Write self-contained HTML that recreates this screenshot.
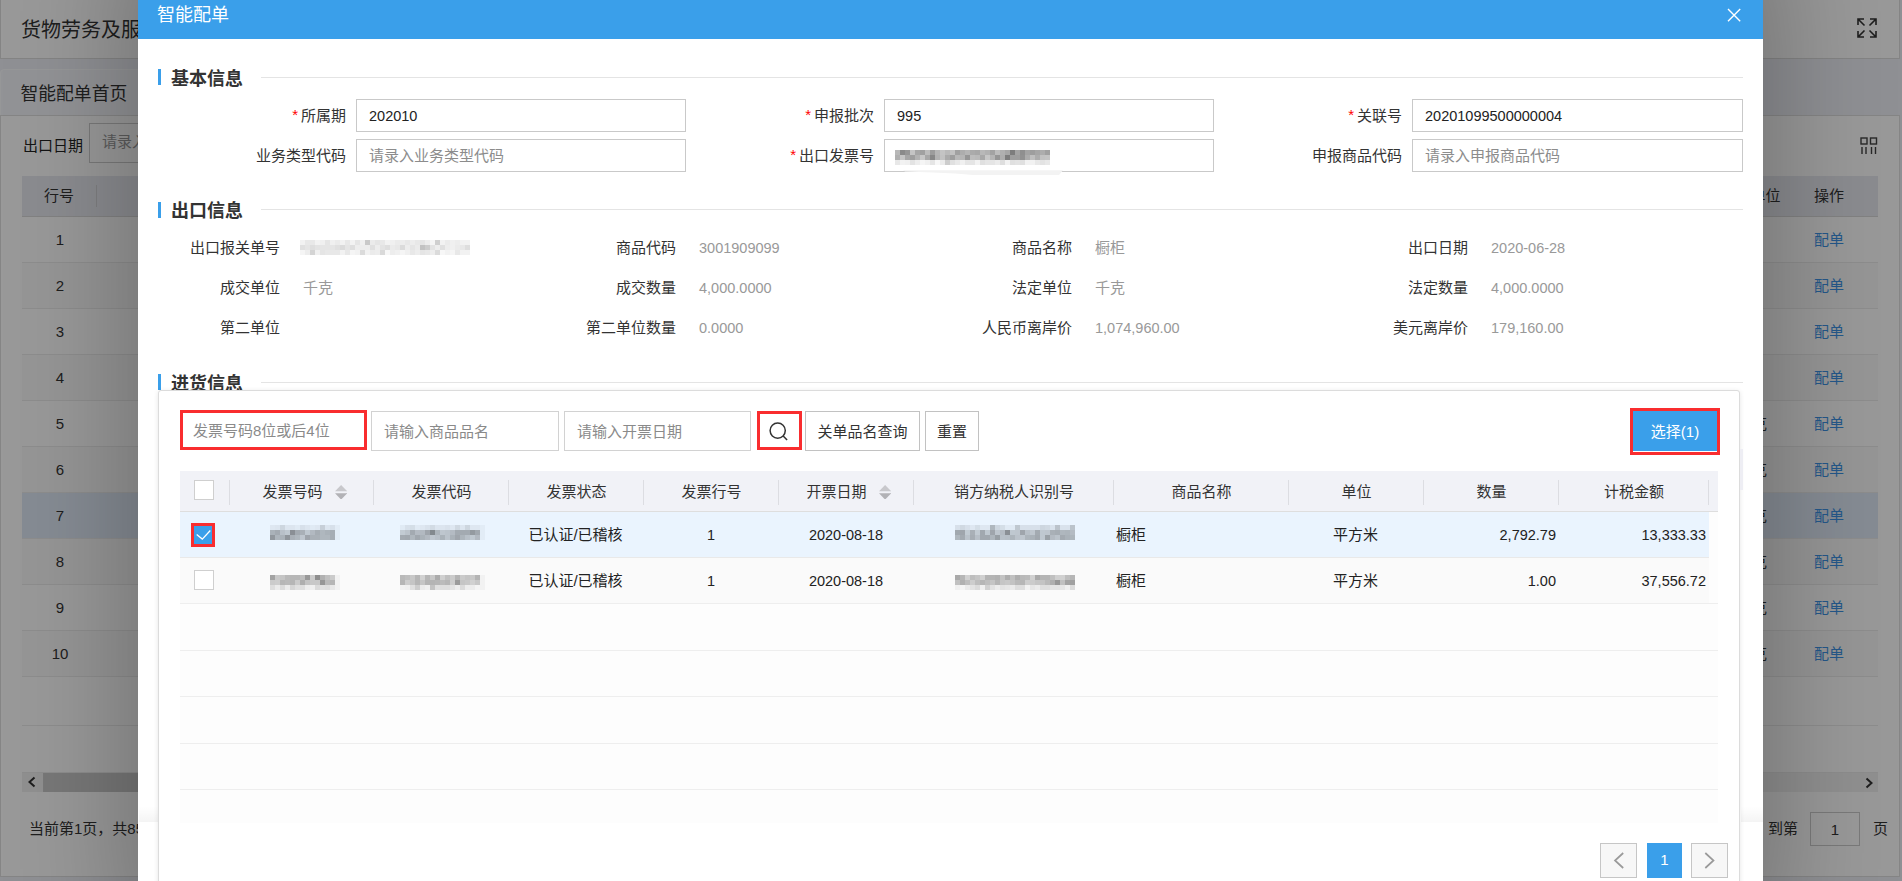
<!DOCTYPE html>
<html lang="zh-CN">
<head>
<meta charset="utf-8">
<title>智能配单</title>
<style>
*{box-sizing:border-box;margin:0;padding:0}
html,body{width:1902px;height:881px;overflow:hidden}
body{font-family:"Liberation Sans","Noto Sans CJK SC",sans-serif;color:#333;background:#eef0f5;position:relative;font-size:15px}
.abs{position:absolute}
/* ---------- underlying page ---------- */
#bgpage{position:absolute;left:0;top:0;width:1902px;height:881px;background:#eef0f7;overflow:hidden}
#topbar{position:absolute;left:0;top:0;width:1900px;height:59px;background:#fff;border:1px solid #dcdcdc;border-top:none}
#topbar .t{position:absolute;left:20px;top:16px;font-size:20px;line-height:28px;color:#333;white-space:nowrap}
#tabbar{position:absolute;left:0;top:69px;width:400px;height:47px;background:#f3f5fa;border:1px solid #fbfcfe;border-radius:4px 4px 0 0}
#tabbar .t{position:absolute;left:19.5px;top:9.5px;font-size:17.8px;line-height:28px;color:#333;white-space:nowrap}
#main{position:absolute;left:0;top:115px;width:1900px;height:762px;background:#fff;box-shadow:inset 0 0 0 1px #dedede}
#main .lbl{position:absolute;left:23px;top:20px;font-size:15px;line-height:22px;color:#222;white-space:nowrap}
#main .inp{position:absolute;left:89px;top:8px;width:200px;height:40px;border:1px solid #ccc;background:#fff;padding-left:12px;line-height:36px;font-size:15px;color:#999;white-space:nowrap}
#bgth{position:absolute;left:22px;top:61px;width:1856px;height:41px;background:#e8eaf1;border-bottom:1px solid #d9d9d9}
#bgth span{position:absolute;top:9px;font-size:15px;line-height:22px;color:#333;white-space:nowrap}
#bgth i{position:absolute;top:9px;width:1px;height:22px;background:#d4d4d8}
.bgrow{position:absolute;left:22px;width:1856px;height:46px;border-bottom:1px solid #ebebeb;background:#fff}
.bgrow.alt{background:#fafafa}
.bgrow.hl{background:#dfe9f7}
.bgrow .n{position:absolute;left:0;width:76px;text-align:center;top:12px;font-size:15px;line-height:22px;color:#333}
.bgrow .u{position:absolute;left:1730px;top:12px;font-size:15px;line-height:22px;color:#333}
.bgrow .a{position:absolute;left:1792px;top:12px;font-size:15px;line-height:22px;color:#3d93e6}
#hscroll{position:absolute;left:22px;top:658px;width:1856px;height:19px;background:#f0f0f0}
#hscroll .thumb{position:absolute;left:21px;top:0;width:1600px;height:19px;background:#c8c8c8}
#pgl{position:absolute;left:29px;top:703px;font-size:15px;line-height:22px;color:#333;white-space:nowrap}
#pgr{position:absolute;left:1768px;top:703px;font-size:15px;line-height:22px;color:#333;white-space:nowrap}
#pginp{position:absolute;left:1810px;top:697px;width:50px;height:34px;border:1px solid #ccc;background:#fff;text-align:center;line-height:33px;font-size:15px;color:#333}
#pgy{position:absolute;left:1873px;top:703px;font-size:15px;line-height:22px;color:#333}
#mask{position:absolute;left:0;top:0;width:1902px;height:881px;background:rgba(0,0,0,.4)}
#shadow{position:absolute;left:138px;top:-60px;width:1625px;height:1000px;box-shadow:0 0 110px 10px rgba(0,0,0,.28)}
/* ---------- modal ---------- */
#modal{position:absolute;left:138px;top:0;width:1625px;height:881px;background:#fff;overflow:hidden}
#mhead{position:absolute;left:0;top:0;width:1625px;height:39px;background:#3a9fea}
#mhead .t{position:absolute;left:19px;top:2px;font-size:18px;line-height:27px;color:#fff;white-space:nowrap}

/* modal body: coordinates relative to modal (x-138) */
.sec{position:absolute;left:20px;width:1585px;height:20px}
.sec .bar{position:absolute;left:0;top:2px;width:3px;height:16px;background:#3a9fea}
.sec .tt{position:absolute;left:13px;top:-2.5px;font-size:18px;line-height:28px;font-weight:bold;color:#333;white-space:nowrap}
.sec .ln{position:absolute;left:103px;right:0;top:10px;height:1px;background:#e4e4e4}
.fl{position:absolute;width:188px;text-align:right;font-size:15px;line-height:34px;color:#333;white-space:nowrap}
.fl b{color:#f00;font-weight:normal;font-family:"Liberation Sans",sans-serif;margin-right:3px;position:relative;top:-1.2px}
.fi{position:absolute;width:330px;height:33px;border:1px solid #c9c9c9;background:#fff;padding-left:12px;font-size:14.5px;line-height:32px;color:#222;white-space:nowrap}
.fi.ph{color:#8c8c8c;font-size:15px}
.el{position:absolute;width:122px;text-align:right;font-size:15px;line-height:24px;margin-top:-0.5px;color:#333;white-space:nowrap}
.ev{position:absolute;font-size:14.5px;line-height:24px;margin:-0.5px 0 0 1px;color:#999;white-space:nowrap}
#panel{position:absolute;left:20px;top:390px;width:1582px;height:520px;border:1px solid #dcdcdc;border-radius:3px;background:#fff;box-shadow:0 1px 5px rgba(0,0,0,.10)}
.si{position:absolute;top:411px;height:40px;width:187px;border:1px solid #d2d2d2;background:#fff;padding-left:12px;font-size:15px;line-height:40px;color:#8a8a8a;white-space:nowrap}
.sb{position:absolute;top:411px;height:40px;border:1px solid #c2c2c2;background:#fff;font-size:15px;line-height:40px;color:#333;text-align:center;white-space:nowrap}
.red{border:2px solid #ee2a33 !important}
#selbtn{position:absolute;left:1492px;top:408px;width:90px;height:47px;border:3px solid #f92d2f;background:#fff linear-gradient(#3a9fea,#3a9fea) no-repeat;background-size:100% 40px;color:#fff;font-size:15px;line-height:41px;text-align:center;white-space:nowrap}
#tbl{position:absolute;left:42px;top:471px;width:1538px;height:352px;background:#fdfdfd}
#thead{position:absolute;left:0;top:0;width:1538px;height:41px;background:#f1f2f7;border-bottom:1px solid #dedede}
#thead span{position:absolute;top:9.7px;margin-left:1px;font-size:15px;line-height:22px;color:#333;white-space:nowrap;text-align:center}
#thead i{position:absolute;top:9px;width:1px;height:25px;background:#dcdde2}
.tr{position:absolute;left:0;width:1529px;height:46px}
.tr span{position:absolute;top:12px;font-size:15px;line-height:22px;color:#222;white-space:nowrap}
.tr span.num{font-size:14.5px;padding-right:2px !important}
.tl{position:absolute;left:0;width:1538px;height:1px;background:#eeeeee}
.cb{position:absolute;width:20px;height:20px;border:1px solid #cfcfcf;background:#fff}
.pg{position:absolute;top:843px;height:35px;border:1px solid #c6c6c6;background:#f7f7f7}
</style>
</head>
<body>
<div id="bgpage">
  <div id="topbar"><div class="t">货物劳务及服</div>
    <svg class="abs" style="left:1855px;top:17px" width="22" height="22" viewBox="0 0 22 22" fill="none" stroke="#333" stroke-width="1.6"><path d="M2 8V2h6M2 2l6.5 6.5M14 2h6v6M20 2l-6.5 6.5M2 14v6h6M2 20l6.5-6.5M20 14v6h-6M20 20l-6.5-6.5"/></svg>
  </div>
  <div id="tabbar"><div class="t">智能配单首页</div></div>
  <div id="main">
    <div class="lbl">出口日期</div>
    <div class="inp">请录入</div>
    <svg class="abs" style="left:1860px;top:22px" width="18" height="18" viewBox="0 0 18 18" fill="none" stroke="#444" stroke-width="1.4"><rect x="1" y="1" width="6" height="6"/><rect x="10.5" y="1" width="6" height="6"/><path d="M2 10v7M6 10v7M11.5 10v7M15.5 10v7"/></svg>
    <div id="bgth"><span style="left:22px">行号</span><i style="left:74px"></i><span style="left:1728.5px">单位</span><span style="left:1792px">操作</span></div>
    <div class="bgrow" style="top:102px"><span class="n">1</span><span class="a">配单</span></div>
    <div class="bgrow alt" style="top:148px"><span class="n">2</span><span class="a">配单</span></div>
    <div class="bgrow" style="top:194px"><span class="n">3</span><span class="a">配单</span></div>
    <div class="bgrow alt" style="top:240px"><span class="n">4</span><span class="a">配单</span></div>
    <div class="bgrow" style="top:286px"><span class="n">5</span><span class="u">克</span><span class="a">配单</span></div>
    <div class="bgrow alt" style="top:332px"><span class="n">6</span><span class="u">克</span><span class="a">配单</span></div>
    <div class="bgrow hl" style="top:378px"><span class="n">7</span><span class="u">克</span><span class="a">配单</span></div>
    <div class="bgrow alt" style="top:424px"><span class="n">8</span><span class="u">克</span><span class="a">配单</span></div>
    <div class="bgrow" style="top:470px"><span class="n">9</span><span class="u">克</span><span class="a">配单</span></div>
    <div class="bgrow alt" style="top:516px"><span class="n">10</span><span class="u">克</span><span class="a">配单</span></div>
    <div class="bgrow" style="top:562px;height:49px"></div>
    <div class="bgrow" style="top:611px;height:47px"></div>
    <div id="hscroll"><div class="thumb"></div>
      <svg class="abs" style="left:4px;top:3px" width="12" height="12" viewBox="0 0 12 12" fill="none" stroke="#333" stroke-width="2"><path d="M8.5 1.5L3.5 6l5 4.5"/></svg>
      <svg class="abs" style="left:1841px;top:4px" width="12" height="12" viewBox="0 0 12 12" fill="none" stroke="#333" stroke-width="2"><path d="M3.5 1.5L8.5 6l-5 4.5"/></svg>
    </div>
    <div id="pgl">当前第1页，共85</div>
    <div id="pgr">到第</div><div id="pginp">1</div><div id="pgy">页</div>
  </div>
  <div id="mask"></div>
  <div id="shadow"></div>
</div>
<div id="modal">
  <div id="mhead"><div class="t">智能配单</div>
    <svg class="abs" style="left:1588.5px;top:8.2px" width="14" height="14" viewBox="0 0 14 14" fill="none" stroke="#fff" stroke-width="1.4"><path d="M1 1l12.2 12.2M13.2 1L1 13.2"/></svg>
  </div>
  <div class="sec" style="top:67px"><div class="bar"></div><div class="tt">基本信息</div><div class="ln"></div></div>
  <div class="fl" style="left:20px;top:99px"><b>*</b>所属期</div>
  <div class="fi" style="left:218px;top:99px">202010</div>
  <div class="fl" style="left:548px;top:99px"><b>*</b>申报批次</div>
  <div class="fi" style="left:746px;top:99px">995</div>
  <div class="fl" style="left:1076px;top:99px"><b>*</b>关联号</div>
  <div class="fi" style="left:1274px;top:99px;width:331px">20201099500000004</div>
  <div class="fl" style="left:20px;top:139px">业务类型代码</div>
  <div class="fi ph" style="left:218px;top:139px">请录入业务类型代码</div>
  <div class="fl" style="left:548px;top:139px"><b>*</b>出口发票号</div>
  <div class="fi" style="left:746px;top:139px"></div>
  <div class="fl" style="left:1076px;top:139px">申报商品代码</div>
  <div class="fi ph" style="left:1274px;top:139px;width:331px">请录入申报商品代码</div>
  <div class="sec" style="top:199px"><div class="bar" style="top:3px"></div><div class="tt">出口信息</div><div class="ln"></div></div>
  <div class="el" style="left:20px;top:236px">出口报关单号</div>
  <div class="el" style="left:416px;top:236px">商品代码</div>
  <div class="ev" style="left:560px;top:236px">3001909099</div>
  <div class="el" style="left:812px;top:236px">商品名称</div>
  <div class="ev" style="left:956px;top:236px;font-size:15px">橱柜</div>
  <div class="el" style="left:1208px;top:236px">出口日期</div>
  <div class="ev" style="left:1352px;top:236px">2020-06-28</div>
  <div class="el" style="left:20px;top:276px">成交单位</div>
  <div class="ev" style="left:164px;top:276px;font-size:15px">千克</div>
  <div class="el" style="left:416px;top:276px">成交数量</div>
  <div class="ev" style="left:560px;top:276px">4,000.0000</div>
  <div class="el" style="left:812px;top:276px">法定单位</div>
  <div class="ev" style="left:956px;top:276px;font-size:15px">千克</div>
  <div class="el" style="left:1208px;top:276px">法定数量</div>
  <div class="ev" style="left:1352px;top:276px">4,000.0000</div>
  <div class="el" style="left:20px;top:316px">第二单位</div>
  <div class="el" style="left:416px;top:316px">第二单位数量</div>
  <div class="ev" style="left:560px;top:316px">0.0000</div>
  <div class="el" style="left:812px;top:316px">人民币离岸价</div>
  <div class="ev" style="left:956px;top:316px">1,074,960.00</div>
  <div class="el" style="left:1208px;top:316px">美元离岸价</div>
  <div class="ev" style="left:1352px;top:316px">179,160.00</div>
  <div class="sec" style="top:372px"><div class="bar"></div><div class="tt">进货信息</div><div class="ln"></div></div>
  <div class="abs" style="left:1px;top:806px;width:19px;height:16px;background:linear-gradient(rgba(0,0,0,0),rgba(0,0,0,.045))"></div><div class="abs" style="left:1603px;top:806px;width:22px;height:16px;background:linear-gradient(rgba(0,0,0,0),rgba(0,0,0,.045))"></div>
  <div id="panel"></div>
  <div class="si" style="left:42px;top:410px;width:187px;height:40px;border:3px solid #f92d2f;padding-left:10px;line-height:36px">发票号码8位或后4位</div>
  <div class="si" style="left:233px;width:188px">请输入商品品名</div>
  <div class="si" style="left:426px;width:187px">请输入开票日期</div>
  <div class="sb" style="left:619px;top:411px;width:45px;height:39px;border:3px solid #f92d2f"><svg class="abs" style="left:5px;top:4px" width="30" height="30" viewBox="0 0 30 30" fill="none" stroke="#333" stroke-width="1.5"><circle cx="12.7" cy="12.6" r="7.6"/><path d="M18.2 18l3.9 4"/></svg></div>
  <div class="sb" style="left:667px;width:115px">关单品名查询</div>
  <div class="sb" style="left:787px;width:54px">重置</div>
  <div class="abs" style="left:1602px;top:449px;width:3px;height:41px;background:#eeeef4"></div>
  <div id="selbtn">选择(1)</div>
  <div id="tbl">
  <div id="thead">
  <div class="cb" style="left:14px;top:9px"></div>
  <span style="left:81.5px;width:auto">发票号码</span>
  <svg class="abs" style="left:154.9px;top:13.5px" width="12.2" height="14.6" viewBox="0 0 12.2 14.6"><path d="M6.1 0l6.1 6.3H0z" fill="#c8c8cc"/><path d="M6.1 14.6l6.1-6.3H0z" fill="#b2b2b6"/></svg>
  <span style="left:193px;width:135px">发票代码</span>
  <span style="left:328px;width:135px">发票状态</span>
  <span style="left:463px;width:135px">发票行号</span>
  <span style="left:625.5px;width:auto">开票日期</span>
  <svg class="abs" style="left:699px;top:13.5px" width="12.2" height="14.6" viewBox="0 0 12.2 14.6"><path d="M6.1 0l6.1 6.3H0z" fill="#c8c8cc"/><path d="M6.1 14.6l6.1-6.3H0z" fill="#b2b2b6"/></svg>
  <span style="left:733px;width:200px">销方纳税人识别号</span>
  <span style="left:933px;width:175px">商品名称</span>
  <span style="left:1108px;width:135px">单位</span>
  <span style="left:1243px;width:135px">数量</span>
  <span style="left:1378px;width:150px">计税金额</span>
  <i style="left:49px"></i>
  <i style="left:193px"></i>
  <i style="left:328px"></i>
  <i style="left:463px"></i>
  <i style="left:598px"></i>
  <i style="left:733px"></i>
  <i style="left:933px"></i>
  <i style="left:1108px"></i>
  <i style="left:1243px"></i>
  <i style="left:1378px"></i>
  <i style="left:1528px"></i>
  </div>
  <div class="tr" style="top:41px;background:#eaf4fe;border-bottom:1px solid #e9e9e9">
  <div class="cb" style="left:14px;top:13px;background:#3a9fea;border-color:#3a9fea"><svg class="abs" style="left:-1px;top:-1px" width="20" height="20" viewBox="0 0 20 20" fill="none" stroke="#fff" stroke-width="1.3"><path d="M2.7 9.5l5.6 4.6 8-8.6"/></svg></div><div class="abs" style="left:11px;top:11px;width:24px;height:24px;border:3px solid #f92d2f"></div>
  <span class="" style="left:328px;width:135px;text-align:center;padding:0 3px;">已认证/已稽核</span>
  <span class="num" style="left:463px;width:135px;text-align:center;padding:0 3px;">1</span>
  <span class="num" style="left:598px;width:135px;text-align:center;padding:0 3px;">2020-08-18</span>
  <span class="" style="left:933px;width:175px;text-align:left;padding:0 3px;">橱柜</span>
  <span class="" style="left:1108px;width:135px;text-align:center;padding:0 3px;">平方米</span>
  <span class="num" style="left:1243px;width:135px;text-align:right;padding:0 3px;">2,792.79</span>
  <span class="num" style="left:1378px;width:150px;text-align:right;padding:0 3px;">13,333.33</span>
  </div>
  <div class="tr" style="top:87px;background:#fafafa;border-bottom:1px solid #e9e9e9">
  <div class="cb" style="left:14px;top:12px"></div>
  <span class="" style="left:328px;width:135px;text-align:center;padding:0 3px;">已认证/已稽核</span>
  <span class="num" style="left:463px;width:135px;text-align:center;padding:0 3px;">1</span>
  <span class="num" style="left:598px;width:135px;text-align:center;padding:0 3px;">2020-08-18</span>
  <span class="" style="left:933px;width:175px;text-align:left;padding:0 3px;">橱柜</span>
  <span class="" style="left:1108px;width:135px;text-align:center;padding:0 3px;">平方米</span>
  <span class="num" style="left:1243px;width:135px;text-align:right;padding:0 3px;">1.00</span>
  <span class="num" style="left:1378px;width:150px;text-align:right;padding:0 3px;">37,556.72</span>
  </div>
  <div class="tl" style="top:132px"></div>
  <div class="tl" style="top:178.7px"></div>
  <div class="tl" style="top:225.4px"></div>
  <div class="tl" style="top:272.2px"></div>
  <div class="tl" style="top:317.5px"></div>
  </div>
  <div class="pg" style="left:1462px;width:37px"><svg class="abs" style="left:11px;top:8.4px" width="14" height="17" viewBox="0 0 14 17" fill="none" stroke="#9a9a9a" stroke-width="1.7"><path d="M11.2 1L3 8.5l8.2 7.5"/></svg></div>
  <div class="pg" style="left:1509px;width:35px;background:#3a9fea;border-color:#3a9fea;color:#fff;text-align:center;font-size:15px;line-height:31px">1</div>
  <div class="pg" style="left:1553px;width:37px"><svg class="abs" style="left:10px;top:8.4px" width="14" height="17" viewBox="0 0 14 17" fill="none" stroke="#9a9a9a" stroke-width="1.7"><path d="M3.3 1l8.2 7.5L3.3 16"/></svg></div>
  <svg class="abs" style="left:757px;top:150px" width="160" height="15" viewBox="0 0 160 15" shape-rendering="crispEdges"><g fill="#000"><rect x="0" y="0" width="5" height="5" fill-opacity=".28"/><rect x="5" y="0" width="5" height="5" fill-opacity=".46"/><rect x="10" y="0" width="5" height="5" fill-opacity=".41"/><rect x="15" y="0" width="5" height="5" fill-opacity=".23"/><rect x="20" y="0" width="5" height="5" fill-opacity=".35"/><rect x="25" y="0" width="5" height="5" fill-opacity=".37"/><rect x="30" y="0" width="5" height="5" fill-opacity=".26"/><rect x="35" y="0" width="5" height="5" fill-opacity=".39"/><rect x="40" y="0" width="5" height="5" fill-opacity=".29"/><rect x="45" y="0" width="5" height="5" fill-opacity=".23"/><rect x="50" y="0" width="5" height="5" fill-opacity=".27"/><rect x="55" y="0" width="5" height="5" fill-opacity=".24"/><rect x="60" y="0" width="5" height="5" fill-opacity=".37"/><rect x="65" y="0" width="5" height="5" fill-opacity=".32"/><rect x="70" y="0" width="5" height="5" fill-opacity=".29"/><rect x="75" y="0" width="5" height="5" fill-opacity=".33"/><rect x="80" y="0" width="5" height="5" fill-opacity=".34"/><rect x="85" y="0" width="5" height="5" fill-opacity=".28"/><rect x="90" y="0" width="5" height="5" fill-opacity=".30"/><rect x="95" y="0" width="5" height="5" fill-opacity=".36"/><rect x="100" y="0" width="5" height="5" fill-opacity=".26"/><rect x="105" y="0" width="5" height="5" fill-opacity=".31"/><rect x="110" y="0" width="5" height="5" fill-opacity=".35"/><rect x="115" y="0" width="5" height="5" fill-opacity=".51"/><rect x="120" y="0" width="5" height="5" fill-opacity=".36"/><rect x="125" y="0" width="5" height="5" fill-opacity=".44"/><rect x="130" y="0" width="5" height="5" fill-opacity=".36"/><rect x="135" y="0" width="5" height="5" fill-opacity=".38"/><rect x="140" y="0" width="5" height="5" fill-opacity=".35"/><rect x="145" y="0" width="5" height="5" fill-opacity=".32"/><rect x="150" y="0" width="5" height="5" fill-opacity=".37"/><rect x="0" y="5" width="5" height="5" fill-opacity=".31"/><rect x="5" y="5" width="5" height="5" fill-opacity=".23"/><rect x="10" y="5" width="5" height="5" fill-opacity=".35"/><rect x="15" y="5" width="5" height="5" fill-opacity=".38"/><rect x="20" y="5" width="5" height="5" fill-opacity=".30"/><rect x="25" y="5" width="5" height="5" fill-opacity=".22"/><rect x="30" y="5" width="5" height="5" fill-opacity=".34"/><rect x="35" y="5" width="5" height="5" fill-opacity=".47"/><rect x="40" y="5" width="5" height="5" fill-opacity=".30"/><rect x="45" y="5" width="5" height="5" fill-opacity=".24"/><rect x="50" y="5" width="5" height="5" fill-opacity=".33"/><rect x="55" y="5" width="5" height="5" fill-opacity=".38"/><rect x="60" y="5" width="5" height="5" fill-opacity=".28"/><rect x="65" y="5" width="5" height="5" fill-opacity=".29"/><rect x="70" y="5" width="5" height="5" fill-opacity=".41"/><rect x="75" y="5" width="5" height="5" fill-opacity=".26"/><rect x="80" y="5" width="5" height="5" fill-opacity=".27"/><rect x="85" y="5" width="5" height="5" fill-opacity=".34"/><rect x="90" y="5" width="5" height="5" fill-opacity=".22"/><rect x="95" y="5" width="5" height="5" fill-opacity=".29"/><rect x="100" y="5" width="5" height="5" fill-opacity=".41"/><rect x="105" y="5" width="5" height="5" fill-opacity=".32"/><rect x="110" y="5" width="5" height="5" fill-opacity=".51"/><rect x="115" y="5" width="5" height="5" fill-opacity=".38"/><rect x="120" y="5" width="5" height="5" fill-opacity=".38"/><rect x="125" y="5" width="5" height="5" fill-opacity=".43"/><rect x="130" y="5" width="5" height="5" fill-opacity=".33"/><rect x="135" y="5" width="5" height="5" fill-opacity=".25"/><rect x="140" y="5" width="5" height="5" fill-opacity=".32"/><rect x="145" y="5" width="5" height="5" fill-opacity=".24"/><rect x="150" y="5" width="5" height="5" fill-opacity=".23"/><rect x="0" y="10" width="5" height="5" fill-opacity=".09"/><rect x="5" y="10" width="5" height="5" fill-opacity=".05"/><rect x="10" y="10" width="5" height="5" fill-opacity=".06"/><rect x="15" y="10" width="5" height="5" fill-opacity=".11"/><rect x="20" y="10" width="5" height="5" fill-opacity=".07"/><rect x="25" y="10" width="5" height="5" fill-opacity=".04"/><rect x="30" y="10" width="5" height="5" fill-opacity=".06"/><rect x="35" y="10" width="5" height="5" fill-opacity=".10"/><rect x="40" y="10" width="5" height="5" fill-opacity=".03"/><rect x="45" y="10" width="5" height="5" fill-opacity=".08"/><rect x="50" y="10" width="5" height="5" fill-opacity=".20"/><rect x="55" y="10" width="5" height="5" fill-opacity=".12"/><rect x="60" y="10" width="5" height="5" fill-opacity=".09"/><rect x="65" y="10" width="5" height="5" fill-opacity=".06"/><rect x="70" y="10" width="5" height="5" fill-opacity=".10"/><rect x="75" y="10" width="5" height="5" fill-opacity=".10"/><rect x="80" y="10" width="5" height="5" fill-opacity=".05"/><rect x="85" y="10" width="5" height="5" fill-opacity=".12"/><rect x="90" y="10" width="5" height="5" fill-opacity=".10"/><rect x="95" y="10" width="5" height="5" fill-opacity=".10"/><rect x="100" y="10" width="5" height="5" fill-opacity=".08"/><rect x="105" y="10" width="5" height="5" fill-opacity=".13"/><rect x="110" y="10" width="5" height="5" fill-opacity=".05"/><rect x="115" y="10" width="5" height="5" fill-opacity=".12"/><rect x="120" y="10" width="5" height="5" fill-opacity=".11"/><rect x="125" y="10" width="5" height="5" fill-opacity=".12"/><rect x="130" y="10" width="5" height="5" fill-opacity=".05"/><rect x="135" y="10" width="5" height="5" fill-opacity=".05"/><rect x="140" y="10" width="5" height="5" fill-opacity=".09"/><rect x="145" y="10" width="5" height="5" fill-opacity=".11"/><rect x="150" y="10" width="5" height="5" fill-opacity=".09"/></g></svg>
  <svg class="abs" style="left:765px;top:169px" width="162" height="8" viewBox="0 0 162 8"><path d="M0 1.2L160 1.2 156 6 70 6 52 4.6 30 3.4 2 2.4z" fill="#f3f3f3"/></svg>
  <svg class="abs" style="left:162px;top:240px" width="175" height="15" viewBox="0 0 175 15" shape-rendering="crispEdges"><g fill="#000"><rect x="0" y="0" width="5" height="5" fill-opacity=".05"/><rect x="5" y="0" width="5" height="5" fill-opacity=".09"/><rect x="10" y="0" width="5" height="5" fill-opacity=".09"/><rect x="15" y="0" width="5" height="5" fill-opacity=".05"/><rect x="20" y="0" width="5" height="5" fill-opacity=".06"/><rect x="25" y="0" width="5" height="5" fill-opacity=".10"/><rect x="30" y="0" width="5" height="5" fill-opacity=".06"/><rect x="35" y="0" width="5" height="5" fill-opacity=".08"/><rect x="40" y="0" width="5" height="5" fill-opacity=".05"/><rect x="45" y="0" width="5" height="5" fill-opacity=".09"/><rect x="50" y="0" width="5" height="5" fill-opacity=".05"/><rect x="55" y="0" width="5" height="5" fill-opacity=".10"/><rect x="60" y="0" width="5" height="5" fill-opacity=".06"/><rect x="65" y="0" width="5" height="5" fill-opacity=".21"/><rect x="70" y="0" width="5" height="5" fill-opacity=".08"/><rect x="75" y="0" width="5" height="5" fill-opacity=".10"/><rect x="80" y="0" width="5" height="5" fill-opacity=".09"/><rect x="85" y="0" width="5" height="5" fill-opacity=".05"/><rect x="90" y="0" width="5" height="5" fill-opacity=".06"/><rect x="95" y="0" width="5" height="5" fill-opacity=".08"/><rect x="100" y="0" width="5" height="5" fill-opacity=".07"/><rect x="105" y="0" width="5" height="5" fill-opacity=".09"/><rect x="110" y="0" width="5" height="5" fill-opacity=".07"/><rect x="115" y="0" width="5" height="5" fill-opacity=".09"/><rect x="120" y="0" width="5" height="5" fill-opacity=".10"/><rect x="125" y="0" width="5" height="5" fill-opacity=".07"/><rect x="130" y="0" width="5" height="5" fill-opacity=".04"/><rect x="135" y="0" width="5" height="5" fill-opacity=".19"/><rect x="140" y="0" width="5" height="5" fill-opacity=".05"/><rect x="145" y="0" width="5" height="5" fill-opacity=".08"/><rect x="150" y="0" width="5" height="5" fill-opacity=".06"/><rect x="155" y="0" width="5" height="5" fill-opacity=".07"/><rect x="160" y="0" width="5" height="5" fill-opacity=".05"/><rect x="165" y="0" width="5" height="5" fill-opacity=".05"/><rect x="0" y="5" width="5" height="5" fill-opacity=".12"/><rect x="5" y="5" width="5" height="5" fill-opacity=".10"/><rect x="10" y="5" width="5" height="5" fill-opacity=".13"/><rect x="15" y="5" width="5" height="5" fill-opacity=".11"/><rect x="20" y="5" width="5" height="5" fill-opacity=".10"/><rect x="25" y="5" width="5" height="5" fill-opacity=".10"/><rect x="30" y="5" width="5" height="5" fill-opacity=".10"/><rect x="35" y="5" width="5" height="5" fill-opacity=".12"/><rect x="40" y="5" width="5" height="5" fill-opacity=".14"/><rect x="45" y="5" width="5" height="5" fill-opacity=".10"/><rect x="50" y="5" width="5" height="5" fill-opacity=".13"/><rect x="55" y="5" width="5" height="5" fill-opacity=".07"/><rect x="60" y="5" width="5" height="5" fill-opacity=".07"/><rect x="65" y="5" width="5" height="5" fill-opacity=".07"/><rect x="70" y="5" width="5" height="5" fill-opacity=".12"/><rect x="75" y="5" width="5" height="5" fill-opacity=".07"/><rect x="80" y="5" width="5" height="5" fill-opacity=".11"/><rect x="85" y="5" width="5" height="5" fill-opacity=".13"/><rect x="90" y="5" width="5" height="5" fill-opacity=".08"/><rect x="95" y="5" width="5" height="5" fill-opacity=".09"/><rect x="100" y="5" width="5" height="5" fill-opacity=".14"/><rect x="105" y="5" width="5" height="5" fill-opacity=".07"/><rect x="110" y="5" width="5" height="5" fill-opacity=".10"/><rect x="115" y="5" width="5" height="5" fill-opacity=".08"/><rect x="120" y="5" width="5" height="5" fill-opacity=".24"/><rect x="125" y="5" width="5" height="5" fill-opacity=".20"/><rect x="130" y="5" width="5" height="5" fill-opacity=".11"/><rect x="135" y="5" width="5" height="5" fill-opacity=".07"/><rect x="140" y="5" width="5" height="5" fill-opacity=".12"/><rect x="145" y="5" width="5" height="5" fill-opacity=".07"/><rect x="150" y="5" width="5" height="5" fill-opacity=".06"/><rect x="155" y="5" width="5" height="5" fill-opacity=".08"/><rect x="160" y="5" width="5" height="5" fill-opacity=".09"/><rect x="165" y="5" width="5" height="5" fill-opacity=".13"/><rect x="0" y="10" width="5" height="5" fill-opacity=".04"/><rect x="5" y="10" width="5" height="5" fill-opacity=".07"/><rect x="10" y="10" width="5" height="5" fill-opacity=".17"/><rect x="15" y="10" width="5" height="5" fill-opacity=".06"/><rect x="20" y="10" width="5" height="5" fill-opacity=".10"/><rect x="25" y="10" width="5" height="5" fill-opacity=".09"/><rect x="30" y="10" width="5" height="5" fill-opacity=".09"/><rect x="35" y="10" width="5" height="5" fill-opacity=".09"/><rect x="40" y="10" width="5" height="5" fill-opacity=".05"/><rect x="45" y="10" width="5" height="5" fill-opacity=".09"/><rect x="50" y="10" width="5" height="5" fill-opacity=".04"/><rect x="55" y="10" width="5" height="5" fill-opacity=".05"/><rect x="60" y="10" width="5" height="5" fill-opacity=".14"/><rect x="65" y="10" width="5" height="5" fill-opacity=".05"/><rect x="70" y="10" width="5" height="5" fill-opacity=".08"/><rect x="75" y="10" width="5" height="5" fill-opacity=".07"/><rect x="80" y="10" width="5" height="5" fill-opacity=".15"/><rect x="85" y="10" width="5" height="5" fill-opacity=".03"/><rect x="90" y="10" width="5" height="5" fill-opacity=".07"/><rect x="95" y="10" width="5" height="5" fill-opacity=".06"/><rect x="100" y="10" width="5" height="5" fill-opacity=".04"/><rect x="105" y="10" width="5" height="5" fill-opacity=".06"/><rect x="110" y="10" width="5" height="5" fill-opacity=".09"/><rect x="115" y="10" width="5" height="5" fill-opacity=".07"/><rect x="120" y="10" width="5" height="5" fill-opacity=".10"/><rect x="125" y="10" width="5" height="5" fill-opacity=".09"/><rect x="130" y="10" width="5" height="5" fill-opacity=".07"/><rect x="135" y="10" width="5" height="5" fill-opacity=".14"/><rect x="140" y="10" width="5" height="5" fill-opacity=".03"/><rect x="145" y="10" width="5" height="5" fill-opacity=".05"/><rect x="150" y="10" width="5" height="5" fill-opacity=".04"/><rect x="155" y="10" width="5" height="5" fill-opacity=".09"/><rect x="160" y="10" width="5" height="5" fill-opacity=".05"/><rect x="165" y="10" width="5" height="5" fill-opacity=".05"/></g></svg>
  <svg class="abs" style="left:132px;top:525px" width="70" height="15" viewBox="0 0 70 15" shape-rendering="crispEdges"><g fill="#000"><rect x="0" y="0" width="5" height="5" fill-opacity=".05"/><rect x="5" y="0" width="5" height="5" fill-opacity=".06"/><rect x="10" y="0" width="5" height="5" fill-opacity=".12"/><rect x="15" y="0" width="5" height="5" fill-opacity=".06"/><rect x="20" y="0" width="5" height="5" fill-opacity=".06"/><rect x="25" y="0" width="5" height="5" fill-opacity=".04"/><rect x="30" y="0" width="5" height="5" fill-opacity=".08"/><rect x="35" y="0" width="5" height="5" fill-opacity=".06"/><rect x="40" y="0" width="5" height="5" fill-opacity=".04"/><rect x="45" y="0" width="5" height="5" fill-opacity=".05"/><rect x="50" y="0" width="5" height="5" fill-opacity=".15"/><rect x="55" y="0" width="5" height="5" fill-opacity=".06"/><rect x="60" y="0" width="5" height="5" fill-opacity=".08"/><rect x="0" y="5" width="5" height="5" fill-opacity=".27"/><rect x="5" y="5" width="5" height="5" fill-opacity=".30"/><rect x="10" y="5" width="5" height="5" fill-opacity=".21"/><rect x="15" y="5" width="5" height="5" fill-opacity=".18"/><rect x="20" y="5" width="5" height="5" fill-opacity=".41"/><rect x="25" y="5" width="5" height="5" fill-opacity=".30"/><rect x="30" y="5" width="5" height="5" fill-opacity=".28"/><rect x="35" y="5" width="5" height="5" fill-opacity=".18"/><rect x="40" y="5" width="5" height="5" fill-opacity=".24"/><rect x="45" y="5" width="5" height="5" fill-opacity=".29"/><rect x="50" y="5" width="5" height="5" fill-opacity=".25"/><rect x="55" y="5" width="5" height="5" fill-opacity=".27"/><rect x="60" y="5" width="5" height="5" fill-opacity=".29"/><rect x="0" y="10" width="5" height="5" fill-opacity=".38"/><rect x="5" y="10" width="5" height="5" fill-opacity=".26"/><rect x="10" y="10" width="5" height="5" fill-opacity=".27"/><rect x="15" y="10" width="5" height="5" fill-opacity=".39"/><rect x="20" y="10" width="5" height="5" fill-opacity=".28"/><rect x="25" y="10" width="5" height="5" fill-opacity=".25"/><rect x="30" y="10" width="5" height="5" fill-opacity=".19"/><rect x="35" y="10" width="5" height="5" fill-opacity=".32"/><rect x="40" y="10" width="5" height="5" fill-opacity=".28"/><rect x="45" y="10" width="5" height="5" fill-opacity=".28"/><rect x="50" y="10" width="5" height="5" fill-opacity=".25"/><rect x="55" y="10" width="5" height="5" fill-opacity=".25"/><rect x="60" y="10" width="5" height="5" fill-opacity=".29"/><rect x="65" y="0" width="5" height="5" fill-opacity=".03"/><rect x="65" y="5" width="5" height="5" fill-opacity=".03"/><rect x="65" y="10" width="5" height="5" fill-opacity=".03"/></g></svg>
  <svg class="abs" style="left:132px;top:575px" width="70" height="15" viewBox="0 0 70 15" shape-rendering="crispEdges"><g fill="#000"><rect x="0" y="0" width="5" height="5" fill-opacity=".35"/><rect x="5" y="0" width="5" height="5" fill-opacity=".20"/><rect x="10" y="0" width="5" height="5" fill-opacity=".21"/><rect x="15" y="0" width="5" height="5" fill-opacity=".26"/><rect x="20" y="0" width="5" height="5" fill-opacity=".27"/><rect x="25" y="0" width="5" height="5" fill-opacity=".27"/><rect x="30" y="0" width="5" height="5" fill-opacity=".24"/><rect x="35" y="0" width="5" height="5" fill-opacity=".39"/><rect x="40" y="0" width="5" height="5" fill-opacity=".19"/><rect x="45" y="0" width="5" height="5" fill-opacity=".43"/><rect x="50" y="0" width="5" height="5" fill-opacity=".29"/><rect x="55" y="0" width="5" height="5" fill-opacity=".23"/><rect x="60" y="0" width="5" height="5" fill-opacity=".19"/><rect x="0" y="5" width="5" height="5" fill-opacity=".19"/><rect x="5" y="5" width="5" height="5" fill-opacity=".18"/><rect x="10" y="5" width="5" height="5" fill-opacity=".27"/><rect x="15" y="5" width="5" height="5" fill-opacity=".26"/><rect x="20" y="5" width="5" height="5" fill-opacity=".27"/><rect x="25" y="5" width="5" height="5" fill-opacity=".19"/><rect x="30" y="5" width="5" height="5" fill-opacity=".30"/><rect x="35" y="5" width="5" height="5" fill-opacity=".22"/><rect x="40" y="5" width="5" height="5" fill-opacity=".20"/><rect x="45" y="5" width="5" height="5" fill-opacity=".20"/><rect x="50" y="5" width="5" height="5" fill-opacity=".40"/><rect x="55" y="5" width="5" height="5" fill-opacity=".26"/><rect x="60" y="5" width="5" height="5" fill-opacity=".27"/><rect x="0" y="10" width="5" height="5" fill-opacity=".11"/><rect x="5" y="10" width="5" height="5" fill-opacity=".06"/><rect x="10" y="10" width="5" height="5" fill-opacity=".12"/><rect x="15" y="10" width="5" height="5" fill-opacity=".06"/><rect x="20" y="10" width="5" height="5" fill-opacity=".14"/><rect x="25" y="10" width="5" height="5" fill-opacity=".10"/><rect x="30" y="10" width="5" height="5" fill-opacity=".11"/><rect x="35" y="10" width="5" height="5" fill-opacity=".05"/><rect x="40" y="10" width="5" height="5" fill-opacity=".04"/><rect x="45" y="10" width="5" height="5" fill-opacity=".12"/><rect x="50" y="10" width="5" height="5" fill-opacity=".10"/><rect x="55" y="10" width="5" height="5" fill-opacity=".11"/><rect x="60" y="10" width="5" height="5" fill-opacity=".07"/><rect x="65" y="0" width="5" height="5" fill-opacity=".03"/><rect x="65" y="5" width="5" height="5" fill-opacity=".03"/><rect x="65" y="10" width="5" height="5" fill-opacity=".03"/></g></svg>
  <svg class="abs" style="left:262px;top:525px" width="85" height="15" viewBox="0 0 85 15" shape-rendering="crispEdges"><g fill="#000"><rect x="0" y="0" width="5" height="5" fill-opacity=".04"/><rect x="5" y="0" width="5" height="5" fill-opacity=".08"/><rect x="10" y="0" width="5" height="5" fill-opacity=".09"/><rect x="15" y="0" width="5" height="5" fill-opacity=".04"/><rect x="20" y="0" width="5" height="5" fill-opacity=".05"/><rect x="25" y="0" width="5" height="5" fill-opacity=".07"/><rect x="30" y="0" width="5" height="5" fill-opacity=".10"/><rect x="35" y="0" width="5" height="5" fill-opacity=".06"/><rect x="40" y="0" width="5" height="5" fill-opacity=".06"/><rect x="45" y="0" width="5" height="5" fill-opacity=".07"/><rect x="50" y="0" width="5" height="5" fill-opacity=".05"/><rect x="55" y="0" width="5" height="5" fill-opacity=".11"/><rect x="60" y="0" width="5" height="5" fill-opacity=".06"/><rect x="65" y="0" width="5" height="5" fill-opacity=".12"/><rect x="70" y="0" width="5" height="5" fill-opacity=".05"/><rect x="75" y="0" width="5" height="5" fill-opacity=".05"/><rect x="0" y="5" width="5" height="5" fill-opacity=".17"/><rect x="5" y="5" width="5" height="5" fill-opacity=".20"/><rect x="10" y="5" width="5" height="5" fill-opacity=".30"/><rect x="15" y="5" width="5" height="5" fill-opacity=".23"/><rect x="20" y="5" width="5" height="5" fill-opacity=".24"/><rect x="25" y="5" width="5" height="5" fill-opacity=".32"/><rect x="30" y="5" width="5" height="5" fill-opacity=".44"/><rect x="35" y="5" width="5" height="5" fill-opacity=".26"/><rect x="40" y="5" width="5" height="5" fill-opacity=".19"/><rect x="45" y="5" width="5" height="5" fill-opacity=".20"/><rect x="50" y="5" width="5" height="5" fill-opacity=".23"/><rect x="55" y="5" width="5" height="5" fill-opacity=".30"/><rect x="60" y="5" width="5" height="5" fill-opacity=".30"/><rect x="65" y="5" width="5" height="5" fill-opacity=".30"/><rect x="70" y="5" width="5" height="5" fill-opacity=".37"/><rect x="75" y="5" width="5" height="5" fill-opacity=".31"/><rect x="0" y="10" width="5" height="5" fill-opacity=".30"/><rect x="5" y="10" width="5" height="5" fill-opacity=".31"/><rect x="10" y="10" width="5" height="5" fill-opacity=".25"/><rect x="15" y="10" width="5" height="5" fill-opacity=".31"/><rect x="20" y="10" width="5" height="5" fill-opacity=".27"/><rect x="25" y="10" width="5" height="5" fill-opacity=".24"/><rect x="30" y="10" width="5" height="5" fill-opacity=".19"/><rect x="35" y="10" width="5" height="5" fill-opacity=".21"/><rect x="40" y="10" width="5" height="5" fill-opacity=".27"/><rect x="45" y="10" width="5" height="5" fill-opacity=".20"/><rect x="50" y="10" width="5" height="5" fill-opacity=".27"/><rect x="55" y="10" width="5" height="5" fill-opacity=".32"/><rect x="60" y="10" width="5" height="5" fill-opacity=".26"/><rect x="65" y="10" width="5" height="5" fill-opacity=".21"/><rect x="70" y="10" width="5" height="5" fill-opacity=".18"/><rect x="75" y="10" width="5" height="5" fill-opacity=".24"/><rect x="80" y="0" width="5" height="5" fill-opacity=".03"/><rect x="80" y="5" width="5" height="5" fill-opacity=".03"/><rect x="80" y="10" width="5" height="5" fill-opacity=".03"/></g></svg>
  <svg class="abs" style="left:262px;top:575px" width="85" height="15" viewBox="0 0 85 15" shape-rendering="crispEdges"><g fill="#000"><rect x="0" y="0" width="5" height="5" fill-opacity=".26"/><rect x="5" y="0" width="5" height="5" fill-opacity=".24"/><rect x="10" y="0" width="5" height="5" fill-opacity=".20"/><rect x="15" y="0" width="5" height="5" fill-opacity=".27"/><rect x="20" y="0" width="5" height="5" fill-opacity=".16"/><rect x="25" y="0" width="5" height="5" fill-opacity=".27"/><rect x="30" y="0" width="5" height="5" fill-opacity=".20"/><rect x="35" y="0" width="5" height="5" fill-opacity=".31"/><rect x="40" y="0" width="5" height="5" fill-opacity=".17"/><rect x="45" y="0" width="5" height="5" fill-opacity=".23"/><rect x="50" y="0" width="5" height="5" fill-opacity=".19"/><rect x="55" y="0" width="5" height="5" fill-opacity=".28"/><rect x="60" y="0" width="5" height="5" fill-opacity=".19"/><rect x="65" y="0" width="5" height="5" fill-opacity=".21"/><rect x="70" y="0" width="5" height="5" fill-opacity=".20"/><rect x="75" y="0" width="5" height="5" fill-opacity=".28"/><rect x="0" y="5" width="5" height="5" fill-opacity=".27"/><rect x="5" y="5" width="5" height="5" fill-opacity=".18"/><rect x="10" y="5" width="5" height="5" fill-opacity=".21"/><rect x="15" y="5" width="5" height="5" fill-opacity=".27"/><rect x="20" y="5" width="5" height="5" fill-opacity=".21"/><rect x="25" y="5" width="5" height="5" fill-opacity=".28"/><rect x="30" y="5" width="5" height="5" fill-opacity=".28"/><rect x="35" y="5" width="5" height="5" fill-opacity=".27"/><rect x="40" y="5" width="5" height="5" fill-opacity=".25"/><rect x="45" y="5" width="5" height="5" fill-opacity=".27"/><rect x="50" y="5" width="5" height="5" fill-opacity=".18"/><rect x="55" y="5" width="5" height="5" fill-opacity=".38"/><rect x="60" y="5" width="5" height="5" fill-opacity=".21"/><rect x="65" y="5" width="5" height="5" fill-opacity=".20"/><rect x="70" y="5" width="5" height="5" fill-opacity=".16"/><rect x="75" y="5" width="5" height="5" fill-opacity=".20"/><rect x="0" y="10" width="5" height="5" fill-opacity=".03"/><rect x="5" y="10" width="5" height="5" fill-opacity=".04"/><rect x="10" y="10" width="5" height="5" fill-opacity=".10"/><rect x="15" y="10" width="5" height="5" fill-opacity=".18"/><rect x="20" y="10" width="5" height="5" fill-opacity=".06"/><rect x="25" y="10" width="5" height="5" fill-opacity=".04"/><rect x="30" y="10" width="5" height="5" fill-opacity=".22"/><rect x="35" y="10" width="5" height="5" fill-opacity=".10"/><rect x="40" y="10" width="5" height="5" fill-opacity=".11"/><rect x="45" y="10" width="5" height="5" fill-opacity=".11"/><rect x="50" y="10" width="5" height="5" fill-opacity=".09"/><rect x="55" y="10" width="5" height="5" fill-opacity=".05"/><rect x="60" y="10" width="5" height="5" fill-opacity=".12"/><rect x="65" y="10" width="5" height="5" fill-opacity=".05"/><rect x="70" y="10" width="5" height="5" fill-opacity=".05"/><rect x="75" y="10" width="5" height="5" fill-opacity=".02"/><rect x="80" y="0" width="5" height="5" fill-opacity=".03"/><rect x="80" y="5" width="5" height="5" fill-opacity=".03"/><rect x="80" y="10" width="5" height="5" fill-opacity=".03"/></g></svg>
  <svg class="abs" style="left:817px;top:525px" width="120" height="15" viewBox="0 0 120 15" shape-rendering="crispEdges"><g fill="#000"><rect x="0" y="0" width="5" height="5" fill-opacity=".08"/><rect x="5" y="0" width="5" height="5" fill-opacity=".11"/><rect x="10" y="0" width="5" height="5" fill-opacity=".08"/><rect x="15" y="0" width="5" height="5" fill-opacity=".05"/><rect x="20" y="0" width="5" height="5" fill-opacity=".09"/><rect x="25" y="0" width="5" height="5" fill-opacity=".05"/><rect x="30" y="0" width="5" height="5" fill-opacity=".05"/><rect x="35" y="0" width="5" height="5" fill-opacity=".25"/><rect x="40" y="0" width="5" height="5" fill-opacity=".12"/><rect x="45" y="0" width="5" height="5" fill-opacity=".09"/><rect x="50" y="0" width="5" height="5" fill-opacity=".04"/><rect x="55" y="0" width="5" height="5" fill-opacity=".04"/><rect x="60" y="0" width="5" height="5" fill-opacity=".18"/><rect x="65" y="0" width="5" height="5" fill-opacity=".08"/><rect x="70" y="0" width="5" height="5" fill-opacity=".08"/><rect x="75" y="0" width="5" height="5" fill-opacity=".08"/><rect x="80" y="0" width="5" height="5" fill-opacity=".08"/><rect x="85" y="0" width="5" height="5" fill-opacity=".12"/><rect x="90" y="0" width="5" height="5" fill-opacity=".11"/><rect x="95" y="0" width="5" height="5" fill-opacity=".07"/><rect x="100" y="0" width="5" height="5" fill-opacity=".20"/><rect x="105" y="0" width="5" height="5" fill-opacity=".07"/><rect x="110" y="0" width="5" height="5" fill-opacity=".07"/><rect x="115" y="0" width="5" height="5" fill-opacity=".20"/><rect x="0" y="5" width="5" height="5" fill-opacity=".31"/><rect x="5" y="5" width="5" height="5" fill-opacity=".32"/><rect x="10" y="5" width="5" height="5" fill-opacity=".17"/><rect x="15" y="5" width="5" height="5" fill-opacity=".28"/><rect x="20" y="5" width="5" height="5" fill-opacity=".17"/><rect x="25" y="5" width="5" height="5" fill-opacity=".31"/><rect x="30" y="5" width="5" height="5" fill-opacity=".18"/><rect x="35" y="5" width="5" height="5" fill-opacity=".32"/><rect x="40" y="5" width="5" height="5" fill-opacity=".19"/><rect x="45" y="5" width="5" height="5" fill-opacity=".23"/><rect x="50" y="5" width="5" height="5" fill-opacity=".41"/><rect x="55" y="5" width="5" height="5" fill-opacity=".18"/><rect x="60" y="5" width="5" height="5" fill-opacity=".19"/><rect x="65" y="5" width="5" height="5" fill-opacity=".32"/><rect x="70" y="5" width="5" height="5" fill-opacity=".21"/><rect x="75" y="5" width="5" height="5" fill-opacity=".19"/><rect x="80" y="5" width="5" height="5" fill-opacity=".30"/><rect x="85" y="5" width="5" height="5" fill-opacity=".18"/><rect x="90" y="5" width="5" height="5" fill-opacity=".19"/><rect x="95" y="5" width="5" height="5" fill-opacity=".28"/><rect x="100" y="5" width="5" height="5" fill-opacity=".29"/><rect x="105" y="5" width="5" height="5" fill-opacity=".25"/><rect x="110" y="5" width="5" height="5" fill-opacity=".26"/><rect x="115" y="5" width="5" height="5" fill-opacity=".23"/><rect x="0" y="10" width="5" height="5" fill-opacity=".25"/><rect x="5" y="10" width="5" height="5" fill-opacity=".30"/><rect x="10" y="10" width="5" height="5" fill-opacity=".20"/><rect x="15" y="10" width="5" height="5" fill-opacity=".29"/><rect x="20" y="10" width="5" height="5" fill-opacity=".21"/><rect x="25" y="10" width="5" height="5" fill-opacity=".31"/><rect x="30" y="10" width="5" height="5" fill-opacity=".31"/><rect x="35" y="10" width="5" height="5" fill-opacity=".26"/><rect x="40" y="10" width="5" height="5" fill-opacity=".35"/><rect x="45" y="10" width="5" height="5" fill-opacity=".21"/><rect x="50" y="10" width="5" height="5" fill-opacity=".22"/><rect x="55" y="10" width="5" height="5" fill-opacity=".26"/><rect x="60" y="10" width="5" height="5" fill-opacity=".20"/><rect x="65" y="10" width="5" height="5" fill-opacity=".19"/><rect x="70" y="10" width="5" height="5" fill-opacity=".26"/><rect x="75" y="10" width="5" height="5" fill-opacity=".27"/><rect x="80" y="10" width="5" height="5" fill-opacity=".31"/><rect x="85" y="10" width="5" height="5" fill-opacity=".18"/><rect x="90" y="10" width="5" height="5" fill-opacity=".34"/><rect x="95" y="10" width="5" height="5" fill-opacity=".23"/><rect x="100" y="10" width="5" height="5" fill-opacity=".20"/><rect x="105" y="10" width="5" height="5" fill-opacity=".30"/><rect x="110" y="10" width="5" height="5" fill-opacity=".27"/><rect x="115" y="10" width="5" height="5" fill-opacity=".26"/></g></svg>
  <svg class="abs" style="left:817px;top:575px" width="120" height="15" viewBox="0 0 120 15" shape-rendering="crispEdges"><g fill="#000"><rect x="0" y="0" width="5" height="5" fill-opacity=".32"/><rect x="5" y="0" width="5" height="5" fill-opacity=".27"/><rect x="10" y="0" width="5" height="5" fill-opacity=".16"/><rect x="15" y="0" width="5" height="5" fill-opacity=".24"/><rect x="20" y="0" width="5" height="5" fill-opacity=".21"/><rect x="25" y="0" width="5" height="5" fill-opacity=".17"/><rect x="30" y="0" width="5" height="5" fill-opacity=".28"/><rect x="35" y="0" width="5" height="5" fill-opacity=".28"/><rect x="40" y="0" width="5" height="5" fill-opacity=".29"/><rect x="45" y="0" width="5" height="5" fill-opacity=".22"/><rect x="50" y="0" width="5" height="5" fill-opacity=".30"/><rect x="55" y="0" width="5" height="5" fill-opacity=".23"/><rect x="60" y="0" width="5" height="5" fill-opacity=".30"/><rect x="65" y="0" width="5" height="5" fill-opacity=".26"/><rect x="70" y="0" width="5" height="5" fill-opacity=".25"/><rect x="75" y="0" width="5" height="5" fill-opacity=".17"/><rect x="80" y="0" width="5" height="5" fill-opacity=".32"/><rect x="85" y="0" width="5" height="5" fill-opacity=".28"/><rect x="90" y="0" width="5" height="5" fill-opacity=".28"/><rect x="95" y="0" width="5" height="5" fill-opacity=".23"/><rect x="100" y="0" width="5" height="5" fill-opacity=".17"/><rect x="105" y="0" width="5" height="5" fill-opacity=".16"/><rect x="110" y="0" width="5" height="5" fill-opacity=".24"/><rect x="115" y="0" width="5" height="5" fill-opacity=".27"/><rect x="0" y="5" width="5" height="5" fill-opacity=".23"/><rect x="5" y="5" width="5" height="5" fill-opacity=".29"/><rect x="10" y="5" width="5" height="5" fill-opacity=".24"/><rect x="15" y="5" width="5" height="5" fill-opacity=".18"/><rect x="20" y="5" width="5" height="5" fill-opacity=".24"/><rect x="25" y="5" width="5" height="5" fill-opacity=".27"/><rect x="30" y="5" width="5" height="5" fill-opacity=".24"/><rect x="35" y="5" width="5" height="5" fill-opacity=".21"/><rect x="40" y="5" width="5" height="5" fill-opacity=".27"/><rect x="45" y="5" width="5" height="5" fill-opacity=".21"/><rect x="50" y="5" width="5" height="5" fill-opacity=".20"/><rect x="55" y="5" width="5" height="5" fill-opacity=".22"/><rect x="60" y="5" width="5" height="5" fill-opacity=".26"/><rect x="65" y="5" width="5" height="5" fill-opacity=".27"/><rect x="70" y="5" width="5" height="5" fill-opacity=".18"/><rect x="75" y="5" width="5" height="5" fill-opacity=".19"/><rect x="80" y="5" width="5" height="5" fill-opacity=".21"/><rect x="85" y="5" width="5" height="5" fill-opacity=".22"/><rect x="90" y="5" width="5" height="5" fill-opacity=".26"/><rect x="95" y="5" width="5" height="5" fill-opacity=".30"/><rect x="100" y="5" width="5" height="5" fill-opacity=".40"/><rect x="105" y="5" width="5" height="5" fill-opacity=".23"/><rect x="110" y="5" width="5" height="5" fill-opacity=".35"/><rect x="115" y="5" width="5" height="5" fill-opacity=".36"/><rect x="0" y="10" width="5" height="5" fill-opacity=".04"/><rect x="5" y="10" width="5" height="5" fill-opacity=".02"/><rect x="10" y="10" width="5" height="5" fill-opacity=".06"/><rect x="15" y="10" width="5" height="5" fill-opacity=".09"/><rect x="20" y="10" width="5" height="5" fill-opacity=".12"/><rect x="25" y="10" width="5" height="5" fill-opacity=".04"/><rect x="30" y="10" width="5" height="5" fill-opacity=".16"/><rect x="35" y="10" width="5" height="5" fill-opacity=".09"/><rect x="40" y="10" width="5" height="5" fill-opacity=".05"/><rect x="45" y="10" width="5" height="5" fill-opacity=".09"/><rect x="50" y="10" width="5" height="5" fill-opacity=".08"/><rect x="55" y="10" width="5" height="5" fill-opacity=".06"/><rect x="60" y="10" width="5" height="5" fill-opacity=".11"/><rect x="65" y="10" width="5" height="5" fill-opacity=".11"/><rect x="70" y="10" width="5" height="5" fill-opacity=".03"/><rect x="75" y="10" width="5" height="5" fill-opacity=".08"/><rect x="80" y="10" width="5" height="5" fill-opacity=".06"/><rect x="85" y="10" width="5" height="5" fill-opacity=".11"/><rect x="90" y="10" width="5" height="5" fill-opacity=".11"/><rect x="95" y="10" width="5" height="5" fill-opacity=".09"/><rect x="100" y="10" width="5" height="5" fill-opacity=".09"/><rect x="105" y="10" width="5" height="5" fill-opacity=".08"/><rect x="110" y="10" width="5" height="5" fill-opacity=".04"/><rect x="115" y="10" width="5" height="5" fill-opacity=".12"/></g></svg>
</div>
</body>
</html>
